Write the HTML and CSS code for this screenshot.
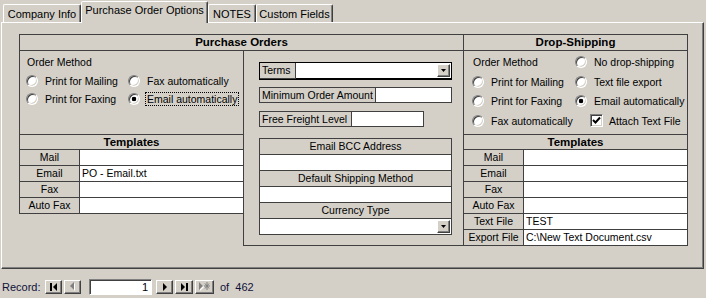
FILE: index.html
```html
<!DOCTYPE html>
<html>
<head>
  <title>Purchase Order Options</title>
  <link rel="stylesheet" href="styles.css">
</head>
<body>
  <div class="tabs">
    <div class="tab tab-company">Company Info</div>
    <div class="tab tab-active">Purchase Order Options</div>
    <div class="tab tab-notes">NOTES</div>
    <div class="tab tab-custom">Custom Fields</div>
  </div>

  <div class="panel">
    <div class="sections">
      <!-- Purchase orders: left options + middle fields -->
      <div class="po">
        <div class="sec-head">Purchase Orders</div>
        <div class="po-body">
          <div class="box po-left">
            <div class="om om-left">
              <div class="om-title">Order Method</div>
              <div></div>
              <div class="opt"><span class="radio"></span>Print for Mailing</div>
              <div class="opt"><span class="radio"></span>Fax automatically</div>
              <div class="opt"><span class="radio"></span>Print for Faxing</div>
              <div class="opt opt-focus"><span class="radio on"></span><span class="focus">Email automatically</span></div>
            </div>
            <div class="tpl-head">Templates</div>
            <div class="tpl-row"><div class="tpl-label">Mail</div><div class="tpl-value"></div></div>
            <div class="tpl-row"><div class="tpl-label">Email</div><div class="tpl-value">PO - Email.txt</div></div>
            <div class="tpl-row"><div class="tpl-label">Fax</div><div class="tpl-value"></div></div>
            <div class="tpl-row"><div class="tpl-label">Auto Fax</div><div class="tpl-value"></div></div>
          </div>

          <div class="box po-mid">
            <div class="combo">
              <div class="combo-label">Terms</div>
              <div class="combo-input">
                <span class="drop-btn"><svg width="5" height="3" viewBox="0 0 5 3"><path d="M0 0H5L2.5 3Z" fill="#000"/></svg></span>
              </div>
            </div>
            <div class="field field-min">
              <div class="field-label">Minimum Order Amount</div>
              <div class="field-input"></div>
            </div>
            <div class="field field-free">
              <div class="field-label">Free Freight Level</div>
              <div class="field-input"></div>
            </div>
            <div class="group">
              <div class="g-label">Email BCC Address</div>
              <div class="g-input"></div>
              <div class="g-label">Default Shipping Method</div>
              <div class="g-input"></div>
              <div class="g-label">Currency Type</div>
              <div class="g-input g-combo">
                <span class="drop-btn"><svg width="5" height="3" viewBox="0 0 5 3"><path d="M0 0H5L2.5 3Z" fill="#000"/></svg></span>
              </div>
            </div>
          </div>
        </div>
      </div>

      <!-- Drop shipping -->
      <div class="ds">
        <div class="sec-head">Drop-Shipping</div>
        <div class="box ds-body">
          <div class="om om-right">
            <div class="om-title">Order Method</div>
            <div class="opt"><span class="radio"></span>No drop-shipping</div>
            <div class="opt"><span class="radio"></span>Print for Mailing</div>
            <div class="opt"><span class="radio"></span>Text file export</div>
            <div class="opt"><span class="radio"></span>Print for Faxing</div>
            <div class="opt"><span class="radio on"></span>Email automatically</div>
            <div class="opt"><span class="radio"></span>Fax automatically</div>
            <div class="opt opt-check">
              <span class="check"><svg width="9" height="9" viewBox="0 0 9 9"><path d="M1 4L3.5 6.5L8 1.5" fill="none" stroke="#000" stroke-width="2"/></svg></span>Attach Text File
            </div>
          </div>
          <div class="tpl-head">Templates</div>
          <div class="tpl-row"><div class="tpl-label">Mail</div><div class="tpl-value"></div></div>
          <div class="tpl-row"><div class="tpl-label">Email</div><div class="tpl-value"></div></div>
          <div class="tpl-row"><div class="tpl-label">Fax</div><div class="tpl-value"></div></div>
          <div class="tpl-row"><div class="tpl-label">Auto Fax</div><div class="tpl-value"></div></div>
          <div class="tpl-row"><div class="tpl-label">Text File</div><div class="tpl-value">TEST</div></div>
          <div class="tpl-row"><div class="tpl-label">Export File</div><div class="tpl-value">C:\New Text Document.csv</div></div>
        </div>
      </div>
    </div>
  </div>

  <div class="nav">
    <span class="nav-label">Record:</span>
    <span class="nav-btn nav-first"><svg width="7" height="8" viewBox="0 0 7 8"><rect x="0" y="0" width="2" height="8" fill="#000"/><path d="M7 0V8L3 4Z" fill="#000"/></svg></span>
    <span class="nav-btn nav-prev"><svg width="6" height="9" viewBox="0 0 6 9"><path d="M5 1V9L1 5Z" fill="#fff"/><path d="M4 0V8L0 4Z" fill="#808080"/></svg></span>
    <span class="nav-record">1</span>
    <span class="nav-btn nav-next"><svg width="4" height="8" viewBox="0 0 4 8"><path d="M0 0V8L4 4Z" fill="#000"/></svg></span>
    <span class="nav-btn nav-last"><svg width="7" height="8" viewBox="0 0 7 8"><path d="M0 0V8L4 4Z" fill="#000"/><rect x="5" y="0" width="2" height="8" fill="#000"/></svg></span>
    <span class="nav-btn nav-new"><svg width="12" height="9" viewBox="0 0 12 9"><path d="M1 1V9L5 5Z" fill="#fff"/><path d="M0 0V8L4 4Z" fill="#808080"/><path d="M8 0V8M5 4H11M6 1.5L10 6.5M10 1.5L6 6.5" stroke="#808080" stroke-width="1"/></svg></span>
    <span class="nav-of">of&nbsp; 462</span>
  </div>
</body>
</html>
```

FILE: styles.css
```css
* {
  box-sizing: border-box;
}

body {
  margin: 0;
  width: 706px;
  height: 298px;
  overflow: hidden;
  background-color: #d4d0c8;
  font-family: "Liberation Sans", Arial, sans-serif;
  font-size: 10.5px;
  color: #000;
}

/* tabs */
.tabs {
  display: flex;
  align-items: flex-end;
  height: 22px;
  padding-left: 3px;
}

.tab {
  height: 18px;
  display: flex;
  align-items: center;
  justify-content: center;
  border: 1px solid;
  border-bottom: none;
  border-color: #fff #404040 transparent #fff;
  border-radius: 2px 2px 0 0;
  box-shadow: inset -1px 0 #808080;
  font-size: 11px;
  padding-top: 1px;
}

.tab-company { width: 78px; }
.tab-notes { width: 48px; }
.tab-custom { width: 77px; }

.tab-active {
  width: 127px;
  height: 22px;
  margin-bottom: -1px;
  z-index: 1;
  background-color: #d4d0c8;
  align-items: flex-start;
  padding-top: 2px;
}

/* main panel */
.panel {
  margin-left: 1px;
  width: 703px;
  height: 247px;
  border: 1px solid;
  border-color: #fff #404040 #404040 #fff;
  box-shadow: inset -1px -1px #808080;
  padding: 11px 0 0 17px;
}

.sections {
  display: flex;
  align-items: flex-start;
}

.po {
  width: 445px;
}

.ds {
  width: 225px;
  margin-left: -1px;
}

.sec-head {
  height: 17px;
  border: 1px solid #404040;
  text-align: center;
  font-weight: bold;
  font-size: 11.5px;
  line-height: 15px;
}

.box {
  border: 1px solid #404040;
  margin-top: -1px;
}

.po-body {
  display: flex;
  align-items: flex-start;
}

.po-left {
  width: 225px;
  height: 164px;
}

.po-mid {
  width: 221px;
  height: 196px;
  margin-left: -1px;
  padding: 11px 0 0 15px;
}

.ds-body {
  width: 225px;
  height: 196px;
}

/* order method radios */
.om {
  height: 83px;
  display: grid;
  align-items: center;
}

.om-left {
  padding: 1px 0 0 6px;
  grid-template-columns: 102px auto;
  grid-template-rows: 20px 18px 18px;
}

.om-right {
  padding: 1px 0 0 8px;
  grid-template-columns: 103px auto;
  grid-template-rows: 20px 19px 20px 19px;
}

.om-title {
  padding-left: 1px;
}

.opt {
  display: flex;
  align-items: center;
  gap: 7px;
  white-space: nowrap;
}

.radio {
  flex: none;
  width: 12px;
  height: 12px;
  border-radius: 50%;
  background: #fff;
  border: 1px solid;
  border-color: #808080 #fff #fff #808080;
  box-shadow: inset 1px 1px #404040, inset -1px -1px #d4d0c8;
}

.radio.on {
  background: radial-gradient(circle, #000 0 2px, #fff 2.6px);
}

.focus {
  outline: 1px dotted #000;
  outline-offset: 0;
  padding: 0 1px;
  margin-left: -1px;
}

.opt-check {
  padding-left: 15px;
  gap: 6px;
}

.check {
  flex: none;
  width: 13px;
  height: 13px;
  display: flex;
  align-items: center;
  justify-content: center;
  background: #fff;
  border: 1px solid;
  border-color: #808080 #fff #fff #808080;
  box-shadow: inset 1px 1px #404040, inset -1px -1px #d4d0c8;
}

/* templates tables */
.tpl-head {
  height: 15px;
  border-top: 1px solid #404040;
  text-align: center;
  font-weight: bold;
  font-size: 11.5px;
  line-height: 14px;
}

.tpl-row {
  display: grid;
  grid-template-columns: 59px 1fr;
  height: 16px;
  border-top: 1px solid #404040;
  line-height: 15px;
}

.tpl-label {
  text-align: center;
  white-space: nowrap;
}

.tpl-value {
  background: #fff;
  border-left: 1px solid #404040;
  padding-left: 2px;
  white-space: nowrap;
  overflow: hidden;
}

/* middle fields */
.combo {
  display: flex;
  width: 193px;
  height: 18px;
  border: 1px solid #000;
  box-shadow: inset 0 -1px #404040;
}

.combo-label {
  width: 36px;
  border-right: 1px solid #404040;
  padding-left: 2px;
  line-height: 15px;
}

.combo-input {
  flex: 1;
  display: flex;
  align-items: center;
  justify-content: flex-end;
  padding-right: 1px;
  background: #fff;
  border-bottom: 1px solid #000;
}

.drop-btn {
  width: 13px;
  height: 13px;
  display: flex;
  align-items: center;
  justify-content: center;
  background: #d4d0c8;
  border: 1px solid;
  border-color: #fff #404040 #404040 #fff;
  box-shadow: inset -1px -1px #808080;
}

.field {
  display: flex;
  height: 16px;
  border: 1px solid #404040;
  line-height: 14px;
}

.field-min {
  width: 193px;
  margin-top: 7px;
}

.field-free {
  width: 165px;
  margin-top: 8px;
}

.field-label {
  border-right: 1px solid #404040;
  padding-left: 2px;
  white-space: nowrap;
}

.field-min .field-label { width: 116px; }
.field-free .field-label { width: 92px; }

.field-input {
  flex: 1;
  background: #fff;
}

.group {
  width: 193px;
  margin-top: 11px;
  border: 1px solid #404040;
}

.g-label,
.g-input {
  height: 16px;
  border-bottom: 1px solid #404040;
}

.g-label {
  text-align: center;
  line-height: 15px;
}

.g-input {
  background: #fff;
}

.g-combo {
  height: 15px;
  border-bottom: none;
  display: flex;
  align-items: center;
  justify-content: flex-end;
  padding-right: 1px;
}

/* record navigation */
.nav {
  display: flex;
  align-items: center;
  height: 29px;
  padding: 6px 0 0 2px;
}

.nav-label {
  width: 43px;
  color: #10103a;
  font-size: 11px;
}

.nav-btn {
  width: 17px;
  height: 14px;
  display: flex;
  align-items: center;
  justify-content: center;
  background: #d4d0c8;
  border: 1px solid;
  border-color: #fff #404040 #404040 #fff;
  box-shadow: inset -1px -1px #808080;
}

.nav-prev {
  margin-left: 2px;
}

.nav-record {
  width: 63px;
  height: 16px;
  margin-left: 8px;
  background: #fff;
  border: 1px solid;
  border-color: #808080 #fff #fff #808080;
  box-shadow: inset 1px 1px #404040;
  text-align: right;
  padding-right: 3px;
  line-height: 14px;
  font-size: 11px;
}

.nav-next {
  margin-left: 4px;
}

.nav-last {
  margin-left: 2px;
  width: 18px;
}

.nav-new {
  margin-left: 2px;
  width: 19px;
}

.nav-of {
  margin-left: 6px;
  color: #10103a;
  font-size: 11px;
}
```
